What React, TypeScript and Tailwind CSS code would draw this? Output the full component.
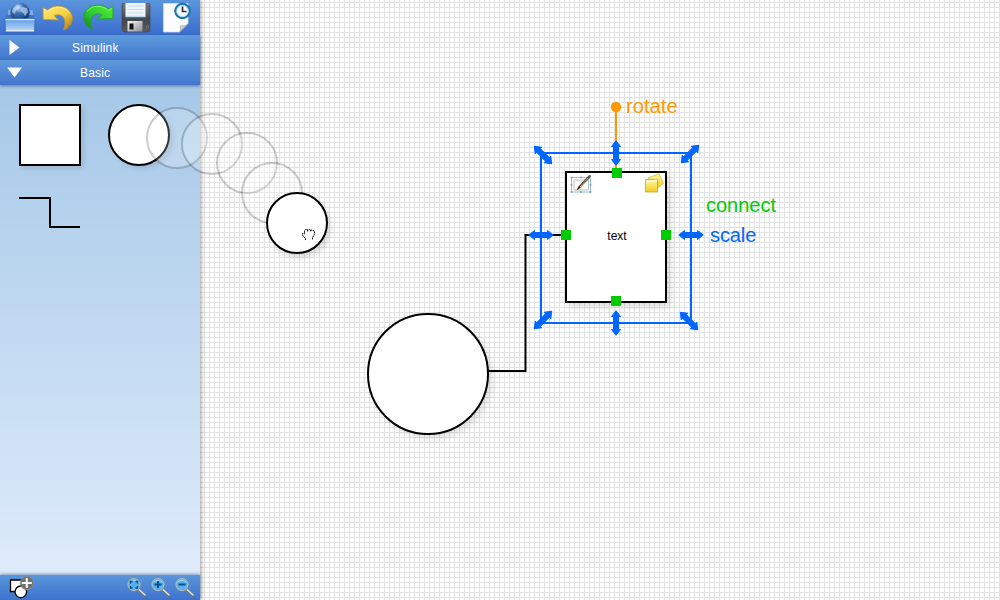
import React from "react";

const FONT = "font-['Liberation_Sans',Arial,sans-serif]";

function OpenIcon() {
  return (
    <svg width="32" height="32" viewBox="0 0 32 32" className="block">
      <defs>
        <radialGradient id="globe" cx=".4" cy=".25" r=".8">
          <stop offset="0" stopColor="#c5dcf8" />
          <stop offset=".35" stopColor="#4376b8" />
          <stop offset="1" stopColor="#092b68" />
        </radialGradient>
        <linearGradient id="tray" x1="0" y1="0" x2="0" y2="1">
          <stop offset="0" stopColor="#a9cdf5" />
          <stop offset=".2" stopColor="#6fa8ea" />
          <stop offset="1" stopColor="#c4dcf8" />
        </linearGradient>
      </defs>
      <path d="M4 8h25v9H4z" fill="#78aceb" />
      <path d="M1.500 16l2-3h25l2 3z" fill="#3d72be" />
      <circle cx="16" cy="10.500" r="9.700" fill="url(#globe)" />
      <path d="M9 6l4-3 4 1-2 3-3 1-1 4-3-2zM18 5l5 1 1 4-3 4-2-3-3-2z" fill="#c2daf6" opacity=".65" />
      <path d="M1 16.500h30l-.5 12.500q0 1-1 1h-27q-1 0-1-1z" fill="url(#tray)" stroke="#3264aa" strokeWidth=".7" />
      <path d="M1.500 17.500h29" stroke="#d1e5ff" />
      <path d="M2 28.500h28" stroke="#e2efff" />
    </svg>
  );
}

function CurvedArrow({ redo = false }: { redo?: boolean }) {
  const id = redo ? "redoFill" : "undoFill";
  return (
    <svg width="32" height="28" viewBox="0 0 32 28" className={redo ? "block -scale-x-100" : "block"}>
      <defs>
        <linearGradient id={id} x1="0" y1="0" x2="1" y2="1">
          <stop offset="0" stopColor={redo ? "#4ff02c" : "#ffe875"} />
          <stop offset=".55" stopColor={redo ? "#2ecb32" : "#f7cf42"} />
          <stop offset="1" stopColor={redo ? "#137b24" : "#a56d13"} />
        </linearGradient>
      </defs>
      <path
        d="M1 3.500L1.200 15.500L16.500 16L12.200 11.800C19.500 8.500 26 14 21.500 26C29 23.500 31.500 16 30 11.500C27.500 2.500 14-1.500 5.500 6z"
        fill={`url(#${id})`}
        stroke={redo ? "#269d2b" : "#bd912e"}
        strokeWidth=".8"
        strokeLinejoin="round"
      />
      <path d="M1.800 5L5.700 7.500C12 2 22 1.500 27 8.500" fill="none" stroke={redo ? "#88f96c" : "#fff3a6"} strokeWidth="1" opacity=".8" />
    </svg>
  );
}

function SaveIcon() {
  return (
    <svg width="30" height="30" viewBox="0 0 30 30" className="block">
      <defs>
        <linearGradient id="disk" x1="0" y1="0" x2="0" y2="1">
          <stop offset="0" stopColor="#777a80" />
          <stop offset=".55" stopColor="#42464d" />
          <stop offset="1" stopColor="#595c62" />
        </linearGradient>
        <linearGradient id="shutter" x1="0" y1="0" x2="1" y2="1">
          <stop offset="0" stopColor="#fafafa" />
          <stop offset="1" stopColor="#898c90" />
        </linearGradient>
      </defs>
      <path d="M2 0h26l1 2v26l-2 1H3l-2-2V2z" fill="url(#disk)" stroke="#42444a" strokeWidth=".7" />
      <path d="M4.500 0h20v13.500h-20z" fill="#eef5fc" />
      <path d="M6.500 3h16M6.500 6.500h16M6.500 10h16" stroke="#cbd9e7" />
      <path d="M4.500 13.500h20" stroke="#b7d6f0" strokeWidth="1.500" />
      <path d="M6.500 18h15v10.500h-15z" fill="url(#shutter)" />
      <path d="M8.500 20.500h4v6h-4z" fill="#111" />
      <path d="M26.500 22l1.500 2-1.500 2-1.500-2z" fill="none" stroke="#747980" strokeWidth=".7" />
    </svg>
  );
}

function HistoryIcon() {
  return (
    <svg width="29" height="31" viewBox="0 0 29 31" className="block">
      <defs>
        <linearGradient id="fold" x1="0" y1="0" x2="1" y2="1">
          <stop offset="0" stopColor="#fff" />
          <stop offset=".5" stopColor="#bbb" />
          <stop offset="1" stopColor="#eee" />
        </linearGradient>
      </defs>
      <path d="M1.500 1.500h24.500V22l-8.500 8H1.500z" fill="#fbfcfd" stroke="#d5dce4" strokeWidth=".8" />
      <path d="M26 22q-4 3-7.500 1.500.5 4-1 7z" fill="url(#fold)" stroke="#888" strokeWidth=".5" />
      <circle cx="20.500" cy="9" r="7.200" fill="#fff" stroke="#1a75aa" strokeWidth="2.200" />
      <circle cx="20.500" cy="9" r="5.700" fill="#f3faff" stroke="#9ed1f0" strokeWidth=".8" />
      <path d="M20.500 4.500v5h4" fill="none" stroke="#333" strokeWidth="1.700" />
    </svg>
  );
}

function Magnifier({ kind }: { kind: "fit" | "plus" | "minus" }) {
  return (
    <svg width="24" height="24" viewBox="0 0 24 24" className="block">
      <path d="M13.500 13.500l6.500 6" stroke="#6f7276" strokeWidth="3" strokeLinecap="round" />
      <path d="M13.500 13.100l6.500 5.800" stroke="#dedbd4" strokeWidth="1.500" strokeLinecap="round" />
      <circle cx="9" cy="8.500" r="6.300" fill="#55b0ed" stroke="#7d8790" strokeWidth="1.500" />
      <circle cx="9" cy="8.500" r="6" fill="none" stroke="#b8d3df" strokeWidth=".8" />
      <path d="M5 6q4-3.500 8 0" fill="none" stroke="#9edaff" strokeWidth="1" />
      {kind === "fit" ? (
        <path d="M5.500 7.500V5.500h2M10.500 5.500h2v2M12.500 10v2h-2M7.500 12h-2v-2" fill="none" stroke="#07508e" strokeWidth="1.400" />
      ) : (
        <path d={kind === "plus" ? "M5.500 8.500h7M9 5v7" : "M5.500 8.500h7"} stroke="#07508e" strokeWidth="2" />
      )}
    </svg>
  );
}

function AddShapeIcon() {
  return (
    <svg width="26" height="24" viewBox="0 0 26 24" className="block">
      <path d="M1.500 5h12v11.500h-12z" fill="#fff" stroke="#000" strokeWidth="1.300" />
      <circle cx="11.800" cy="16.800" r="5.800" fill="#fff" stroke="#000" strokeWidth="1.300" />
      <circle cx="17.800" cy="8" r="6.700" fill="#717171" stroke="#979797" strokeWidth=".6" />
      <path d="M12.800 8h10M17.800 3v10" stroke="#fff" strokeWidth="2" />
    </svg>
  );
}

function EditIcon() {
  return (
    <svg width="22" height="20" viewBox="0 0 22 20" className="absolute left-[3px] top-px">
      <path d="M1.500 3.500h19v14.500h-19z" fill="#fff" stroke="#8ac2df" strokeWidth="1" />
      <path d="M4 6h14.500v10H4z" fill="#fcfcfc" stroke="#bbb" strokeWidth=".9" />
      <path d="M.7 2.700h1.600v1.600H.7zM10.200 2.700h1.600v1.600h-1.600zM.7 10h1.600v1.600H.7zM19.700 10h1.600v1.600h-1.600zM.7 17.200h1.600v1.600H.7zM10.200 17.200h1.600v1.600h-1.600zM19.700 17.200h1.600v1.600h-1.600z" fill="#8a8a8a" />
      <path d="M6.500 16.500L8.500 12.500 19.300 1l1.700 1.500-11.500 12z" fill="#27241b" />
      <path d="M10 13L18.500 3.500" stroke="#d7bd67" strokeWidth="1" />
      <path d="M19 2.800l1.500-1.500" stroke="#8a6832" strokeWidth="1.700" />
    </svg>
  );
}

function BringForwardIcon() {
  return (
    <svg width="22" height="21" viewBox="0 0 22 21" className="absolute right-0 top-0">
      <defs>
        <linearGradient id="note" x1="0" y1="0" x2="0" y2="1">
          <stop offset="0" stopColor="#fff6a0" />
          <stop offset="1" stopColor="#f2ce1e" />
        </linearGradient>
      </defs>
      <path d="M5 5L16 .8l4.500 9.700-6 4.500H7z" fill="url(#note)" stroke="#dcb84b" strokeWidth=".8" />
      <path d="M2.500 6.500h12v12.500h-12z" fill="url(#note)" stroke="#c79d2c" strokeWidth=".8" />
      <path d="M3 8.500l11-1" stroke="#fffbd6" strokeWidth="2" />
    </svg>
  );
}

const arrows = [
  { x: 543, y: 155, angle: 45 },
  { x: 616, y: 153, angle: 90 },
  { x: 690, y: 154, angle: -45 },
  { x: 541, y: 235, angle: 0 },
  { x: 691, y: 235, angle: 0 },
  { x: 543, y: 320, angle: -45 },
  { x: 616, y: 323, angle: 90 },
  { x: 689, y: 321, angle: 45 },
];

const ghosts = [
  [177, 138],
  [212, 144],
  [247, 163],
  [272, 193],
];

function Header({ label, open = false }: { label: string; open?: boolean }) {
  return (
    <div className="relative z-10 flex h-[25px] shrink-0 items-center bg-linear-to-b from-[#5f9add] to-[#4376cd] pl-2 text-xs tracking-[0.15px] text-white shadow-[0_1px_3px_#17458099]">
      <div className="flex w-4 justify-center">
        {open ? (
          <svg width="15" height="11" viewBox="0 0 15 11" className="ml-[-3px] shrink-0"><path d="M0 .5h15L7.500 10.500z" fill="#fff" /></svg>
        ) : (
          <svg width="11" height="15" viewBox="0 0 11 15" className="ml-[-4px] shrink-0"><path d="M.5 0v15L10.500 7.500z" fill="#fff" /></svg>
        )}
      </div>
      <span className={open ? "ml-[56px]" : "ml-[48px]"}>{label}</span>
    </div>
  );
}

function Sidebar() {
  return (
    <aside className="relative z-10 flex h-full w-[200px] shrink-0 flex-col bg-linear-to-b from-[#9cc2e4] to-[#e1edfc] shadow-[1px_0_4px_#0006]">
      <div className="flex h-[35px] shrink-0 items-start bg-linear-to-b from-[#5b95dc] to-[#3b6dce]">
        <div className="ml-1 mt-[2px]"><OpenIcon /></div>
        <div className="ml-[6px] mt-[4px]"><CurvedArrow /></div>
        <div className="ml-[8px] mt-[3px]"><CurvedArrow redo /></div>
        <div className="ml-[7px] mt-[3px]"><SaveIcon /></div>
        <div className="ml-[11px] mt-[2px]"><HistoryIcon /></div>
      </div>
      <Header label="Simulink" />
      <Header label="Basic" open />
      <div className="grid flex-1 grid-cols-[62px_62px] content-start gap-x-[27px] gap-y-[31px] pl-[19px] pt-[19px]">
        <div className="size-[62px] border-2 border-black bg-white shadow-[3px_3px_5px_#0000001a]" />
        <div className="size-[62px] rounded-full border-2 border-black bg-white shadow-[3px_3px_5px_#0000001a]" />
        <svg width="62" height="31" viewBox="0 0 62 31"><path d="M0 1h31v29h30" fill="none" stroke="#000" strokeWidth="2" /></svg>
      </div>
      <div className="flex h-[25px] shrink-0 items-start justify-between bg-linear-to-b from-[#5a96dc] to-[#3f72ce] pl-[9px] pr-[3px] shadow-[0_-1px_3px_#17458077]">
        <AddShapeIcon />
        <div className="mt-px flex"><Magnifier kind="fit" /><Magnifier kind="plus" /><Magnifier kind="minus" /></div>
      </div>
    </aside>
  );
}

function Diagram() {
  return (
    <div className="absolute inset-0 z-20">
      <svg width="1000" height="600" viewBox="0 0 1000 600" className="absolute inset-0">
        <g fill="#fff" fillOpacity=".2" stroke="#000" strokeOpacity=".2" strokeWidth="2">
          {ghosts.map(([cx, cy]) => <circle key={cx} cx={cx} cy={cy} r="30" />)}
        </g>
        <path d="M488 371h37.500V235H566" fill="none" stroke="#000" strokeWidth="2" />
      </svg>
      <div className="absolute left-[266px] top-[192px] size-[62px] rounded-full border-2 border-black bg-white shadow-[3px_4px_5px_#0002]">
        <svg width="15" height="13" viewBox="0 0 15 13" className="absolute left-[33px] top-[34px]">
          <path d="M4.500 12V10.500L2.500 8.500L1.500 7V5.500H2.500L3.500 6V3L4.500 1.500L6 1.500L7.500 2L8.500 1.500L10 2L12 2.500L13.500 3.500V6L12.500 8L11.500 9.500V12" fill="#fff" stroke="#000" strokeWidth="1" strokeDasharray="1.600 .6" />
          <path d="M6.500 2v1.500M9.500 2v1.500" stroke="#000" strokeWidth=".8" />
        </svg>
      </div>
      <div className="absolute left-[367px] top-[313px] size-[122px] rounded-full border-2 border-black bg-white shadow-[4px_4px_7px_#0000001c]" />
      <div className="absolute left-[565px] top-[171px] flex h-[132px] w-[102px] items-center justify-center border-2 border-black bg-white text-xs text-black shadow-[4px_4px_7px_#0002]">
        <EditIcon />
        <BringForwardIcon />
        <span className="mb-[2px] ml-[2px]">text</span>
      </div>
      <svg width="1000" height="600" viewBox="0 0 1000 600" className="absolute inset-0">
        <path d="M616 107v65" stroke="#ff9900" strokeWidth="2" />
        <circle cx="616" cy="107" r="5.200" fill="#ff9900" />
        <path d="M541 153h150v170H541z" fill="none" stroke="#0066ff" strokeWidth="2" />
        {arrows.map(({ x, y, angle }) => (
          <path key={`${x}-${y}`} transform={`translate(${x} ${y}) rotate(${angle})`} d="M-12.300 0L-6.500-4.500V-2.500H6.500V-4.500L12.300 0L6.500 4.500V2.500H-6.500V4.500z" fill="#0066ff" stroke="#0066ff" strokeWidth="1" strokeLinejoin="round" />
        ))}
        <path d="M612 168h10v10h-10zM611 296h10v10h-10zM561 230h10v10h-10zM661 230h10v10h-10z" fill="#00cc00" />
      </svg>
      <span className="absolute left-[626px] top-[96px] text-xl leading-5 tracking-[0.1px] text-[#ff9900]">rotate</span>
      <span className="absolute left-[706px] top-[195px] text-xl leading-5 text-[#00cc00]">connect</span>
      <span className="absolute left-[710px] top-[225px] text-xl leading-5 tracking-[-0.1px] text-[#0066ff]">scale</span>
    </div>
  );
}

export default function App() {
  return (
    <main className={`${FONT} relative flex h-[600px] w-[1000px] overflow-hidden bg-white`}>
      <Sidebar />
      <section className="flex-1 bg-[linear-gradient(to_right,#e2e2e2_1px,transparent_1px),linear-gradient(to_bottom,#e2e2e2_1px,transparent_1px)] bg-[size:5px_5px] bg-[position:4px_2px]" />
      <Diagram />
    </main>
  );
}
